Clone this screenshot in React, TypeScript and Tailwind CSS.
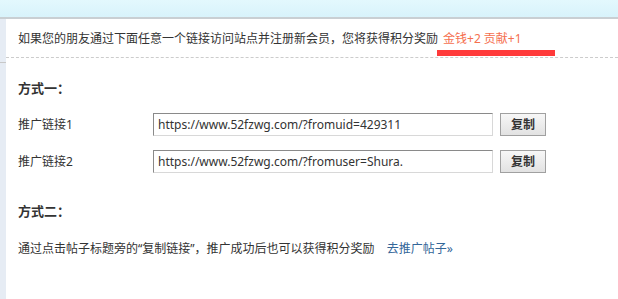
import React from "react";

const font = { fontFamily: '"Noto Sans", "Noto Sans CJK SC", sans-serif' };

function LinkRow({ label, value }: { label: string; value: string }) {
  return (
    <div className="flex items-center h-[23px]">
      <div className="w-[135px] text-[12px] text-[#333]">{label}</div>
      <div className="w-[340px] h-[23px] border border-t-[#8a8a8a] border-l-[#8a8a8a] border-r-[#d8d8d8] border-b-[#d8d8d8] bg-white flex items-center pl-[4px] text-[12px] text-[#333]">
        {value}
      </div>
      <button className="ml-[7px] w-[46px] h-[23px] border border-[#a0a0a0] bg-gradient-to-b from-[#f7f7f7] to-[#e2e2e2] text-[12px] font-bold text-[#333] flex items-center justify-center">
        复制
      </button>
    </div>
  );
}

export default function App() {
  return (
    <div className="w-[618px] h-[299px] bg-white overflow-hidden flex flex-col" style={font}>
      <div className="h-[19px] bg-gradient-to-b from-[#e3f8fd] to-[#d8f3fb] border-b-[2px] border-[#c9cfd3] shrink-0" />
      <div className="flex flex-1">
        <div className="w-[6px] bg-[#e6ecf4] shrink-0 flex flex-col">
          <div className="h-[43px]" />
          <div className="border-t border-dashed border-[#c8c8c8]" />
        </div>
        <div className="flex-1 flex flex-col">
          <div className="relative h-[39px] flex items-end pl-[12px] pb-[9px] border-b border-dashed border-[#cccccc] text-[12px] text-[#333]">
            <span>如果您的朋友通过下面任意一个链接访问站点并注册新会员，您将获得积分奖励</span>
            <span className="ml-[5px] text-[#f5704f]">金钱+2 贡献+1</span>
            <div className="absolute left-[431px] bottom-[1px] w-[118px] h-[6px] bg-[#ff3a3a]" />
          </div>
          <div className="pl-[12px] pt-[21px]">
            <div className="text-[13px] font-bold text-[#333] leading-[18px]">方式一：</div>
            <div className="mt-[16px] flex flex-col gap-[14px]">
              <LinkRow label="推广链接1" value="https://www.52fzwg.com/?fromuid=429311" />
              <LinkRow label="推广链接2" value="https://www.52fzwg.com/?fromuser=Shura." />
            </div>
            <div className="mt-[29px] text-[13px] font-bold text-[#333] leading-[18px]">方式二：</div>
            <div className="mt-[20px] text-[12px] text-[#333] leading-[18px]">
              通过点击帖子标题旁的“复制链接”，推广成功后也可以获得积分奖励
              <a className="ml-[12px] text-[#336699]">去推广帖子»</a>
            </div>
          </div>
        </div>
      </div>
    </div>
  );
}
